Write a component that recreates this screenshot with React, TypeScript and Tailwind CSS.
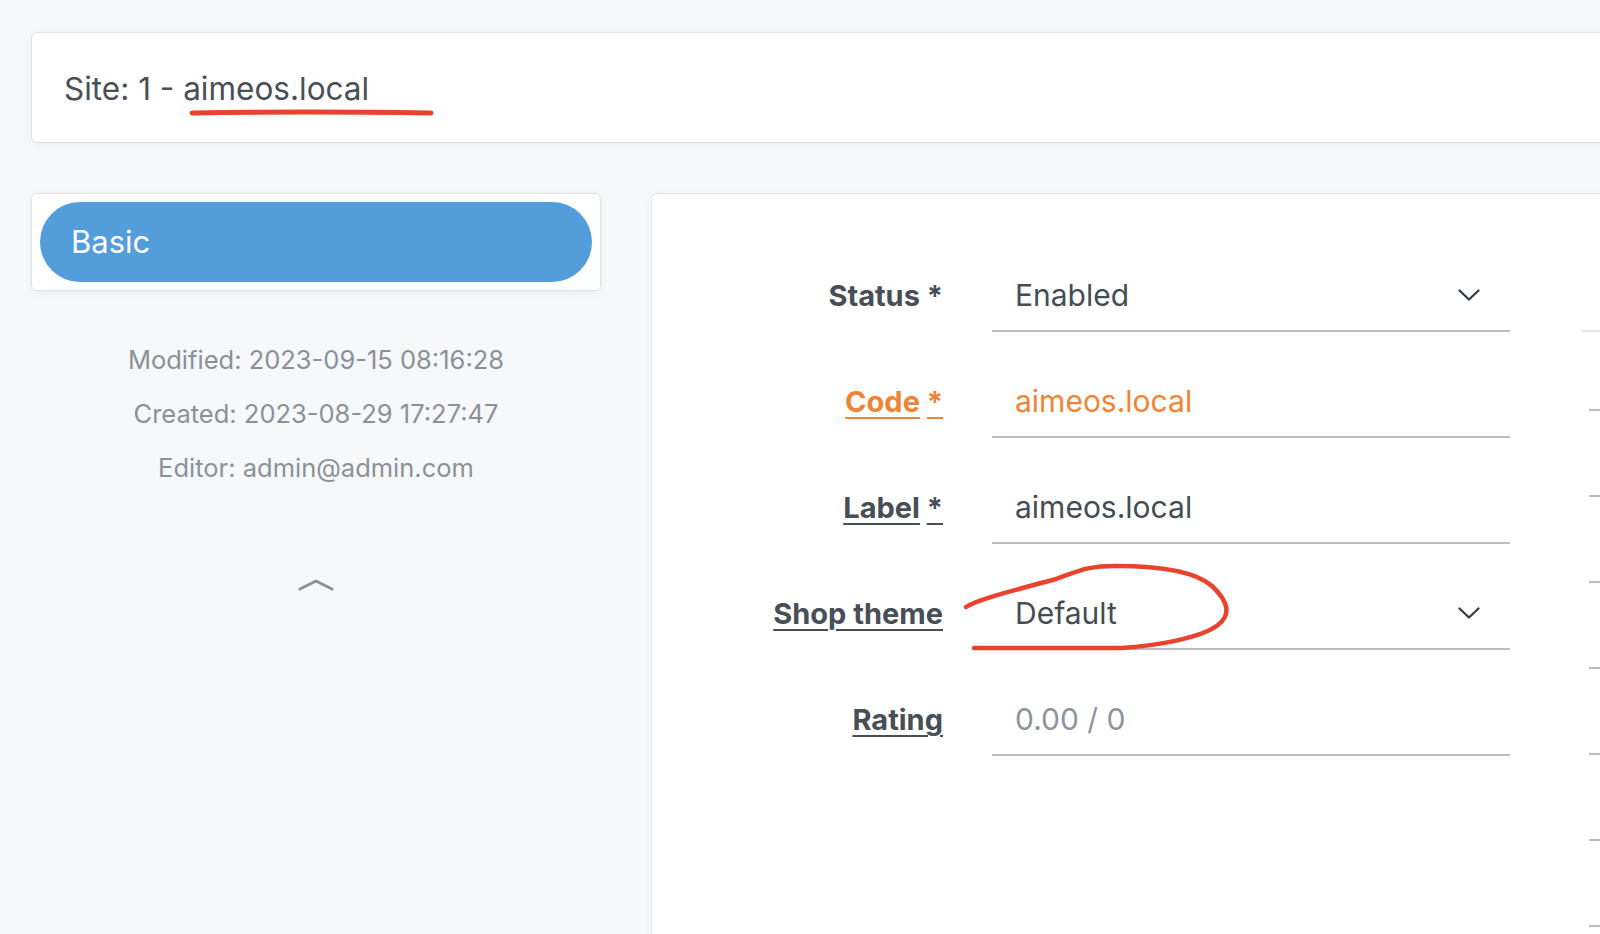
import React from 'react'

const font = { fontFamily: 'Inter, "Noto Sans", sans-serif' }

function ChevronDown() {
  return (
    <svg width="22" height="12" viewBox="0 0 22 12" fill="none">
      <polyline points="1.5,1.5 11,10.5 20.5,1.5" stroke="#333a40" strokeWidth="2.2" strokeLinecap="round" strokeLinejoin="round" />
    </svg>
  )
}

function Field({
  label,
  req,
  underline = true,
  value,
  select,
  tone = 'dark',
  children,
}: {
  label: string
  req?: boolean
  underline?: boolean
  value: string
  select?: boolean
  tone?: 'dark' | 'orange' | 'muted'
  children?: React.ReactNode
}) {
  const labelColor = tone === 'orange' ? 'text-[#ef8434]' : 'text-[#474e56]'
  const valueColor =
    tone === 'orange' ? 'text-[#ef8434]' : tone === 'muted' ? 'text-[#8e949b]' : 'text-[#464c54]'
  return (
    <div className="flex items-end">
      <div className={`w-[291px] h-[72px] flex items-center justify-end text-[29px] font-bold ${labelColor}`}>
        {underline ? (
          <span>
            <span className="underline decoration-2 underline-offset-[5px]">{label}</span>
            {req && (
              <>
                {' '}
                <span className="underline decoration-2 underline-offset-[5px]">*</span>
              </>
            )}
          </span>
        ) : (
          <span>
            {label}
            {req && ' *'}
          </span>
        )}
      </div>
      <div className="relative ml-[49px] w-[518px] h-[72px] border-b-2 border-[#bdbdbd] flex items-center justify-between pl-[23px] pr-[30px]">
        <span className={`text-[30px] ${valueColor}`}>{value}</span>
        {select && <ChevronDown />}
        {children}
      </div>
    </div>
  )
}

export default function App() {
  return (
    <div className="w-[1600px] h-[934px] overflow-hidden bg-[#f7f8fa]" style={font}>
      <div className="pl-[31px] pt-[32px]">
        {/* header */}
        <div className="w-[1620px] h-[111px] bg-white border border-[#e1e2e4] rounded-[6px] shadow-[0_2px_8px_rgba(0,0,0,0.04)] flex items-center pl-[32px] pt-[3px]">
          <h1 className="text-[31.5px] text-[#4a4f57] font-normal">
            Site: 1 -{' '}
            <span className="relative">
              aimeos.local
              <svg className="absolute left-[6px] top-[39px]" width="246" height="10" viewBox="0 0 246 10" fill="none">
                <path d="M3 5 C 60 4, 140 3.5, 242 5" stroke="#e8432d" strokeWidth="5" strokeLinecap="round" />
              </svg>
            </span>
          </h1>
        </div>

        <div className="flex mt-[50px]">
          {/* left column */}
          <div className="w-[570px] shrink-0">
            <div className="h-[98px] bg-white border border-[#e1e2e4] rounded-[6px] shadow-[0_2px_8px_rgba(0,0,0,0.05)] p-[8px]">
              <div className="h-full rounded-full bg-[#529dda] flex items-center pl-[31px] text-white text-[31px]">
                Basic
              </div>
            </div>
            <div className="mt-[42px] text-center text-[25.5px] text-[#8b9199] leading-[54px]">
              <div>Modified: 2023-09-15 08:16:28</div>
              <div>Created: 2023-08-29 17:27:47</div>
              <div>Editor: admin@admin.com</div>
            </div>
            <div className="flex justify-center mt-[84px]">
              <svg width="36" height="12" viewBox="0 0 36 12" fill="none">
                <polyline points="2,10 18,2 34,10" stroke="#8a9099" strokeWidth="3" strokeLinecap="round" strokeLinejoin="round" />
              </svg>
            </div>
          </div>

          {/* main panel */}
          <div className="ml-[50px] w-[1100px] h-[800px] shrink-0 bg-white border-l border-t border-[#e1e2e4] rounded-tl-[6px] shadow-[0_2px_8px_rgba(0,0,0,0.04)] flex">
            <div className="pt-[66px] flex flex-col gap-[34px]">
              <Field label="Status" req underline={false} value="Enabled" select />
              <Field label="Code" req value="aimeos.local" tone="orange" />
              <Field label="Label" req value="aimeos.local" />
              <Field label="Shop theme" value="Default" select>
                <svg className="absolute left-[-36px] top-[-18px] pointer-events-none" width="285" height="95" viewBox="0 0 285 95" fill="none">
                  <path
                    d="M10 47 C 22 39, 60 30, 100 19 C 125 10, 132 6, 160 6 C 200 6, 238 10, 256 26 C 273 42, 275 55, 262 65 C 245 78, 200 86, 165 88 L 18 88"
                    stroke="#e8432d"
                    strokeWidth="4.5"
                    strokeLinecap="round"
                    strokeLinejoin="round"
                  />
                </svg>
              </Field>
              <Field label="Rating" value="0.00 / 0" tone="muted" />
            </div>

            {/* second column, cut off at the right edge */}
            <div className="ml-[71px] w-[200px] flex flex-col">
              <div className="h-[138px] border-b-2 border-[#e6e7e9]" />
              <div className="ml-[8px] flex flex-col">
                <div className="h-[79px] border-b-2 border-[#bdbdbd]" />
                <div className="h-[86px] border-b-2 border-[#bdbdbd]" />
                <div className="h-[86px] border-b-2 border-[#bdbdbd]" />
                <div className="h-[86px] border-b-2 border-[#bdbdbd]" />
                <div className="h-[86px] border-b-2 border-[#bdbdbd]" />
                <div className="h-[86px] border-b-2 border-[#bdbdbd]" />
                <div className="h-[86px] border-b-2 border-[#bdbdbd]" />
              </div>
            </div>
          </div>
        </div>
      </div>
    </div>
  )
}
